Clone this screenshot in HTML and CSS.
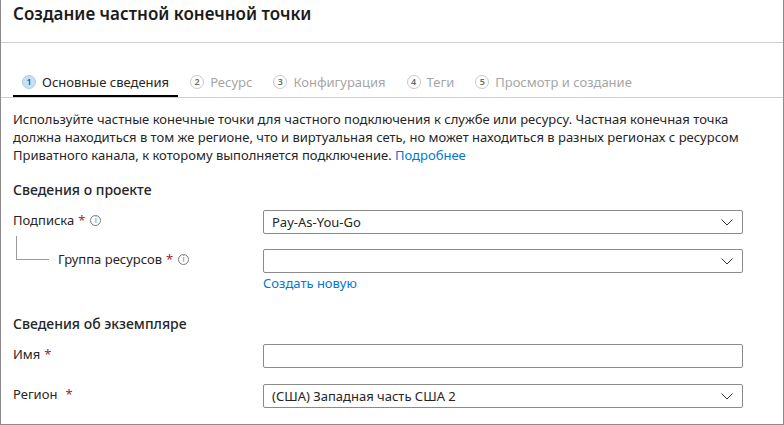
FILE: index.html
```html
<!DOCTYPE html>
<html lang="ru">
<head>
<meta charset="utf-8">
<title>Создание частной конечной точки</title>
<link rel="stylesheet" href="styles.css">
</head>
<body>
<div class="frame">
  <div class="header">
    <h1 class="title">Создание частной конечной точки</h1>
  </div>
  <div class="tabs">
    <div class="tab active"><span class="num">1</span><span class="tab-label">Основные сведения</span></div>
    <div class="tab"><span class="num">2</span><span class="tab-label">Ресурс</span></div>
    <div class="tab"><span class="num">3</span><span class="tab-label">Конфигурация</span></div>
    <div class="tab"><span class="num">4</span><span class="tab-label">Теги</span></div>
    <div class="tab"><span class="num">5</span><span class="tab-label">Просмотр и создание</span></div>
  </div>
  <div class="content">
    <p class="intro">Используйте частные конечные точки для частного подключения к службе или ресурсу. Частная конечная точка должна находиться в том же регионе, что и виртуальная сеть, но может находиться в разных регионах с ресурсом Приватного канала, к которому выполняется подключение. <a class="link" href="#">Подробнее</a></p>

    <h2 class="section">Сведения о проекте</h2>
    <div class="row">
      <div class="label-cell"><span class="label">Подписка</span><span class="req">*</span><span class="info">i</span></div>
      <div class="field-cell">
        <div class="select"><span class="value">Pay-As-You-Go</span><svg class="chev" width="12" height="7" viewBox="0 0 12 7"><polyline points="0.5,0.5 6,6 11.5,0.5" fill="none" stroke="#323130" stroke-width="1"/></svg></div>
      </div>
    </div>
    <div class="row row-sub">
      <div class="label-cell"><span class="tree"></span><span class="label">Группа ресурсов</span><span class="req">*</span><span class="info">i</span></div>
      <div class="field-cell">
        <div class="select"><span class="value"></span><svg class="chev" width="12" height="7" viewBox="0 0 12 7"><polyline points="0.5,0.5 6,6 11.5,0.5" fill="none" stroke="#323130" stroke-width="1"/></svg></div>
        <a class="link create" href="#">Создать новую</a>
      </div>
    </div>

    <h2 class="section section-2">Сведения об экземпляре</h2>
    <div class="row">
      <div class="label-cell"><span class="label">Имя</span><span class="req">*</span></div>
      <div class="field-cell"><div class="input"></div></div>
    </div>
    <div class="row row-region">
      <div class="label-cell"><span class="label">Регион</span><span class="req req-wide">*</span></div>
      <div class="field-cell">
        <div class="select"><span class="value">(США) Западная часть США 2</span><svg class="chev" width="12" height="7" viewBox="0 0 12 7"><polyline points="0.5,0.5 6,6 11.5,0.5" fill="none" stroke="#323130" stroke-width="1"/></svg></div>
      </div>
    </div>
  </div>
</div>
</body>
</html>
```
FILE: styles.css
```css
* { box-sizing: border-box; }
html, body { margin: 0; padding: 0; background: #fff; }
body {
  font-family: "Noto Sans", "Open Sans", sans-serif;
  font-size: 13px;
  color: #262626;
}
.frame {
  width: 784px;
  height: 425px;
  border-left: 1px solid #8c8c8c;
  border-right: 1px solid #8c8c8c;
  border-bottom: 1px solid #8c8c8c;
  overflow: hidden;
}
.header {
  height: 43px;
  border-bottom: 1px solid #cfcfcf;
  padding: 3px 0 0 12px;
}
.title {
  margin: 0;
  font-size: 17px;
  font-weight: 600;
  line-height: 22px;
  color: #1b1b1b;
}
.tabs {
  display: flex;
  padding: 30px 0 0 12px;
  border-bottom: 1px solid #cfcfcf;
  gap: 3px;
}
.tab {
  display: flex;
  align-items: center;
  gap: 6px;
  padding: 0 9px 4px 9px;
  border-bottom: 2px solid transparent;
  line-height: 18px;
  color: #a6a6a6;
}
.tab.active {
  border-bottom-color: #000;
  color: #262626;
}
.num {
  width: 14px;
  height: 14px;
  border-radius: 50%;
  border: 1px solid #c8c8c8;
  font-size: 9px;
  line-height: 12px;
  text-align: center;
  color: #6b6b6b;
  font-weight: 600;
}
.tab.active .num {
  background: #c7e0f4;
  border-color: #a9cdec;
  color: #1a5a96;
}
.content {
  padding: 12px 0 0 12px;
}
.intro {
  margin: 0;
  width: 740px;
  line-height: 18px;
}
.link {
  color: #0078d4;
  text-decoration: none;
}
.section {
  margin: 17px 0 0 0;
  font-size: 14px;
  font-weight: 500;
  line-height: 18px;
  color: #262626;
}
.section-2 { margin-top: 23px; }
.row {
  display: flex;
  align-items: flex-start;
  margin-top: 11px;
}
.row-sub { margin-top: 15px; }
.row-region { margin-top: 16px; }
.label-cell {
  width: 250px;
  display: flex;
  align-items: center;
  height: 18px;
  margin-top: 1px;
}
.label { font-weight: 400; }
.req {
  color: #a4262c;
  margin-left: 4px;
  font-size: 13px;
}
.req-wide { margin-left: 8px; }
.info {
  width: 11px;
  height: 11px;
  border: 1px solid #7a7a7a;
  border-radius: 50%;
  font-size: 8px;
  line-height: 9px;
  text-align: center;
  color: #7a7a7a;
  margin-left: 5px;
  font-family: "DejaVu Sans", sans-serif;
}
.tree {
  width: 33px;
  height: 24px;
  margin: -14px 0 0 3px;
  border-left: 1px solid #9a9a9a;
  border-bottom: 1px solid #9a9a9a;
  margin-right: 9px;
  align-self: flex-start;
}
.field-cell {
  width: 480px;
  display: flex;
  flex-direction: column;
}
.select, .input {
  height: 24px;
  border: 1px solid #8a8a8a;
  border-radius: 2px;
  display: flex;
  align-items: center;
  justify-content: space-between;
  padding: 0 9px 0 8px;
}
.value { color: #262626; }
.chev { display: block; }
.create {
  margin-top: 1px;
  line-height: 18px;
  font-weight: 400;
}
```
